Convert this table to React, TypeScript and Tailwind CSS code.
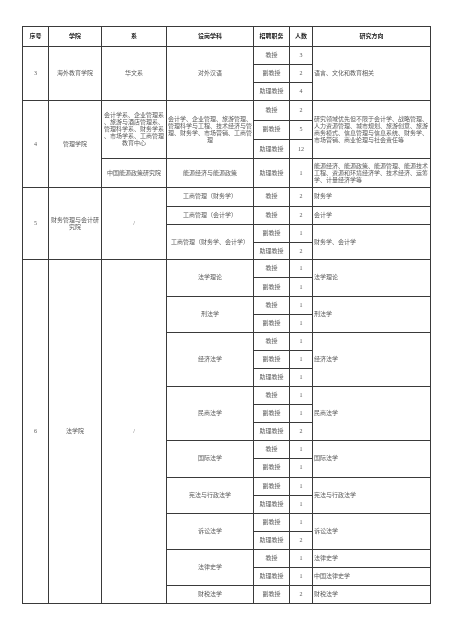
type LawGroup = {
  subject: string;
  rows: string[][];
  direction?: string;
};

const lawGroups: LawGroup[] = [
  { subject: "法学理论", rows: [["教授", "1"], ["副教授", "1"]], direction: "法学理论" },
  { subject: "刑法学", rows: [["教授", "1"], ["副教授", "1"]], direction: "刑法学" },
  { subject: "经济法学", rows: [["教授", "1"], ["副教授", "1"], ["助理教授", "1"]], direction: "经济法学" },
  { subject: "民商法学", rows: [["教授", "1"], ["副教授", "1"], ["助理教授", "2"]], direction: "民商法学" },
  { subject: "国际法学", rows: [["教授", "1"], ["副教授", "1"]], direction: "国际法学" },
  { subject: "宪法与行政法学", rows: [["副教授", "1"], ["助理教授", "1"]], direction: "宪法与行政法学" },
  { subject: "诉讼法学", rows: [["副教授", "1"], ["助理教授", "2"]], direction: "诉讼法学" },
  {
    subject: "法律史学",
    rows: [
      ["教授", "1", "法律史学"],
      ["助理教授", "1", "中国法律史学"],
    ],
  },
  { subject: "财税法学", rows: [["副教授", "2"]], direction: "财税法学" },
];

const cell = "border border-[#3a3a3a] px-[1px] text-center align-middle whitespace-nowrap";
const left = "border border-[#3a3a3a] px-[1px] text-left align-middle whitespace-nowrap";
const head = "border border-[#3a3a3a] text-center align-middle font-bold text-[#222]";

function Lines({ lines }: { lines: string[] }) {
  return (
    <>
      {lines.map((line) => (
        <div key={line} className="whitespace-nowrap">
          {line}
        </div>
      ))}
    </>
  );
}

export default function App() {
  const lawRowCount = lawGroups.reduce((n, g) => n + g.rows.length, 0);

  return (
    <div className="min-h-screen bg-white pl-[22px] pt-[26px] antialiased">
      <table className="table-fixed border-collapse font-['Liberation_Serif','Noto_Sans_CJK_SC',serif] text-[6px] leading-[7px] text-[#5a5a5a] will-change-transform">
        <colgroup>
          <col className="w-[26px]" />
          <col className="w-[53px]" />
          <col className="w-[65px]" />
          <col className="w-[87px]" />
          <col className="w-[36px]" />
          <col className="w-[23px]" />
          <col className="w-[118px]" />
        </colgroup>
        <tbody>
          <tr className="h-[20px]">
            <td className={head}>序号</td>
            <td className={head}>学院</td>
            <td className={head}>系</td>
            <td className={head}>设岗学科</td>
            <td className={head}>招聘职务</td>
            <td className={head}>人数</td>
            <td className={head}>研究方向</td>
          </tr>

          {/* 3 海外教育学院 */}
          <tr className="h-[18px]">
            <td className={cell} rowSpan={3}>3</td>
            <td className={cell} rowSpan={3}>海外教育学院</td>
            <td className={cell} rowSpan={3}>华文系</td>
            <td className={cell} rowSpan={3}>对外汉语</td>
            <td className={cell}>教授</td>
            <td className={cell}>3</td>
            <td className={left} rowSpan={3}>语言、文化和教育相关</td>
          </tr>
          <tr className="h-[18px]">
            <td className={cell}>副教授</td>
            <td className={cell}>2</td>
          </tr>
          <tr className="h-[18px]">
            <td className={cell}>助理教授</td>
            <td className={cell}>4</td>
          </tr>

          {/* 4 管理学院 */}
          <tr className="h-[19.5px]">
            <td className={cell} rowSpan={4}>4</td>
            <td className={cell} rowSpan={4}>管理学院</td>
            <td className={cell} rowSpan={3}>
              <Lines
                lines={[
                  "会计学系、企业管理系",
                  "、旅游与酒店管理系、",
                  "管理科学系、财务学系",
                  "、市场学系、工商管理",
                  "教育中心",
                ]}
              />
            </td>
            <td className={cell} rowSpan={3}>
              <Lines
                lines={[
                  "会计学、企业管理、旅游管理、",
                  "管理科学与工程、技术经济与管",
                  "理、财务学、市场营销、工商管",
                  "理",
                ]}
              />
            </td>
            <td className={cell}>教授</td>
            <td className={cell}>2</td>
            <td className={left} rowSpan={3}>
              <Lines
                lines={[
                  "研究领域优先但不限于会计学、战略管理、",
                  "人力资源管理、城市规划、旅游创意、旅游",
                  "商务模式、信息管理与信息系统、财务学、",
                  "市场营销、商业伦理与社会责任等",
                ]}
              />
            </td>
          </tr>
          <tr className="h-[19.5px]">
            <td className={cell}>副教授</td>
            <td className={cell}>5</td>
          </tr>
          <tr className="h-[19.3px]">
            <td className={cell}>助理教授</td>
            <td className={cell}>12</td>
          </tr>
          <tr className="h-[29px]">
            <td className={cell}>中国能源政策研究院</td>
            <td className={cell}>能源经济与能源政策</td>
            <td className={cell}>助理教授</td>
            <td className={cell}>1</td>
            <td className={left}>
              <Lines
                lines={[
                  "能源经济、能源政策、能源管理、能源技术",
                  "工程、资源和环境经济学、技术经济、运筹",
                  "学、计量经济学等",
                ]}
              />
            </td>
          </tr>

          {/* 5 财务管理与会计研究院 */}
          <tr className="h-[18.3px]">
            <td className={cell} rowSpan={4}>5</td>
            <td className={cell} rowSpan={4}>
              <Lines lines={["财务管理与会计研", "究院"]} />
            </td>
            <td className={cell} rowSpan={4}>/</td>
            <td className={cell}>工商管理（财务学）</td>
            <td className={cell}>教授</td>
            <td className={cell}>2</td>
            <td className={left}>财务学</td>
          </tr>
          <tr className="h-[18.3px]">
            <td className={cell}>工商管理（会计学）</td>
            <td className={cell}>教授</td>
            <td className={cell}>2</td>
            <td className={left}>会计学</td>
          </tr>
          <tr className="h-[18px]">
            <td className={cell} rowSpan={2}>工商管理（财务学、会计学）</td>
            <td className={cell}>副教授</td>
            <td className={cell}>1</td>
            <td className={left} rowSpan={2}>财务学、会计学</td>
          </tr>
          <tr className="h-[17.5px]">
            <td className={cell}>助理教授</td>
            <td className={cell}>2</td>
          </tr>

          {/* 6 法学院 */}
          {lawGroups.map((group, gi) =>
            group.rows.map((row, ri) => (
              <tr key={`${group.subject}-${ri}`} className="h-[18.1px]">
                {gi === 0 && ri === 0 && (
                  <>
                    <td className={cell} rowSpan={lawRowCount}>6</td>
                    <td className={cell} rowSpan={lawRowCount}>法学院</td>
                    <td className={cell} rowSpan={lawRowCount}>/</td>
                  </>
                )}
                {ri === 0 && (
                  <td className={cell} rowSpan={group.rows.length}>
                    {group.subject}
                  </td>
                )}
                <td className={cell}>{row[0]}</td>
                <td className={cell}>{row[1]}</td>
                {group.direction ? (
                  ri === 0 && (
                    <td className={left} rowSpan={group.rows.length}>
                      {group.direction}
                    </td>
                  )
                ) : (
                  <td className={left}>{row[2]}</td>
                )}
              </tr>
            ))
          )}
        </tbody>
      </table>
    </div>
  );
}
